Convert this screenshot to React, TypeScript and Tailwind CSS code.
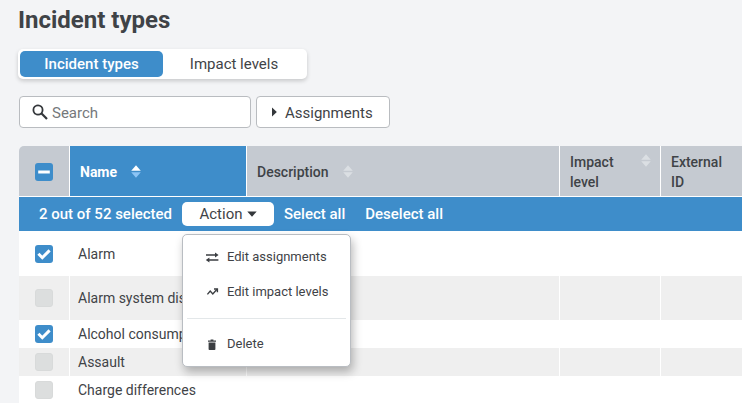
import { useState } from 'react';
import { clsx } from 'clsx';

type Incident = {
  name: string;
  checked: boolean;
  height: string;
};

const incidents: Incident[] = [
  { name: 'Alarm', checked: true, height: 'h-[45px]' },
  { name: 'Alarm system disarmed', checked: false, height: 'h-11' },
  { name: 'Alcohol consumption', checked: true, height: 'h-7' },
  { name: 'Assault', checked: false, height: 'h-7' },
  { name: 'Charge differences', checked: false, height: 'h-7' },
];

const tabs = ['Incident types', 'Impact levels'];

const SearchIcon = () => (
  <svg viewBox="0 0 16 16" className="h-4 w-4 shrink-0" fill="none" stroke="#34373b" strokeWidth="1.8">
    <circle cx="6" cy="6" r="4.6" />
    <path d="M9.3 9.3 15 15" strokeWidth="2.2" />
  </svg>
);

const SortIcon = ({ active = false }: { active?: boolean }) => (
  <svg viewBox="0 0 10 14" className="h-3.5 w-2.5 shrink-0">
    <path d="M5 .3 9.8 5.8H.2z" fill={active ? '#fff' : '#dbdfe3'} />
    <path d="M5 12.7.2 7.2h9.6z" fill={active ? '#8cc4f5' : '#dbdfe3'} />
  </svg>
);

const SwapIcon = () => (
  <svg viewBox="0 0 14 12" className="h-3 w-3.5" fill="#3b3e42">
    <path d="M1 2.2h9V.4l3.6 2.6L10 5.6V3.8H1z" />
    <path d="M13.4 7.2H4.4V5.4L.8 8l3.6 2.6V8.8h9z" />
  </svg>
);

const TrendIcon = () => (
  <svg viewBox="0 0 14 12" className="h-3 w-3.5" fill="none" stroke="#3b3e42" strokeWidth="1.4">
    <path d="M2.4 7.4 5.2 4l2.6 3L12 2.2" />
    <path d="M9 2h3.4v3.2" />
  </svg>
);

const TrashIcon = () => (
  <svg viewBox="0 0 14 12" className="h-3 w-3.5" fill="#3b3e42">
    <path d="M5.6.6h2.8v.8H11v1.4H3V1.4h2.6zM3.6 3.6h6.8v6.6q0 .8-.9.8h-5q-.9 0-.9-.8z" />
  </svg>
);

type CheckboxProps = {
  label: string;
  checked?: boolean;
  mixed?: boolean;
  onChange?: () => void;
};

const Checkbox = ({ label, checked = false, mixed = false, onChange }: CheckboxProps) => (
  <label className="ml-4 grid h-[18px] w-[18px] place-items-center">
    <input
      type="checkbox"
      aria-label={label}
      checked={checked}
      onChange={onChange}
      className={clsx(
        'col-start-1 row-start-1 h-[18px] w-[18px] appearance-none rounded-[3px]',
        checked || mixed ? 'bg-[#3e8dca]' : 'border border-[#d8dada] bg-[#dcdede]',
      )}
    />
    {(checked || mixed) && (
      <svg
        viewBox="0 0 18 18"
        className="pointer-events-none col-start-1 row-start-1 h-[18px] w-[18px]"
        fill="none"
        stroke="#fff"
        strokeWidth="3"
      >
        <path d={mixed ? 'M3.2 9h11.6' : 'M3.4 8.8 7.3 12.7l7.3-7.3'} />
      </svg>
    )}
  </label>
);

const ActionMenu = () => {
  const [open, setOpen] = useState(true);

  return (
    <div className="relative">
      <button
        onClick={() => setOpen(!open)}
        className="flex h-6 w-[92px] items-center justify-center gap-1 rounded-[5px] bg-white pt-0.5 text-[15px] font-normal text-[#3f4347]"
      >
        Action
        <svg viewBox="0 0 10 6" className="mb-0.5 h-1.5 w-2.5" fill="#34373b">
          <path d="M.3.4h9.4L5 5.7z" />
        </svg>
      </button>
      {open && (
        <div className="absolute top-8 left-0 z-10 w-[169px] rounded-[5px] border border-[#b9bdc2] bg-white px-1 pt-[5px] pb-1 text-[13px] font-normal text-[#3f4347] shadow-[2px_5px_10px_rgba(0,0,0,0.28)]">
          <button className="flex h-[35px] w-full items-center gap-2 pl-[18px]">
            <SwapIcon />
            Edit assignments
          </button>
          <button className="flex h-[35px] w-full items-center gap-2 pl-[18px]">
            <TrendIcon />
            Edit impact levels
          </button>
          <hr className="my-2 border-[#e3e7e9]" />
          <button className="flex h-[35px] w-full items-center gap-2 pl-[18px]">
            <TrashIcon />
            Delete
          </button>
        </div>
      )}
    </div>
  );
};

const App = () => {
  const [rows, setRows] = useState(incidents);
  const [tab, setTab] = useState(tabs[0]);

  const toggle = (name: string) => {
    setRows(rows.map((row) => (row.name === name ? { ...row, checked: !row.checked } : row)));
  };

  return (
    <main className="h-screen overflow-hidden bg-[#f3f4f6] pt-1 pl-[18px] font-[Roboto,sans-serif] text-[#3f4347]">
      <h1 className="text-2xl font-bold">Incident types</h1>

      <div className="mt-[13px] flex w-fit rounded-[5px] bg-white p-0.5 text-[15px] shadow-[0_2px_4px_rgba(0,0,0,0.18)]">
        {tabs.map((item) => (
          <button
            key={item}
            onClick={() => setTab(item)}
            className={clsx(
              'h-[26px] rounded-[5px]',
              item === tab ? 'w-[143px] bg-[#3e8dca] font-medium text-white' : 'w-[142px]',
            )}
          >
            {item}
          </button>
        ))}
      </div>

      <div className="mt-[17px] ml-px flex gap-[5px]">
        <label className="flex h-8 w-[232px] items-center gap-1 rounded-[4px] border border-[#b9bcc0] bg-white pl-3">
          <SearchIcon />
          <input
            type="text"
            aria-label="Search"
            placeholder="Search"
            className="w-full min-w-0 bg-transparent pt-0.5 text-[15px] outline-none placeholder:text-[#75787b]"
          />
        </label>
        <button className="flex h-8 w-[134px] items-center gap-2 rounded-[4px] border border-[#b9bcc0] bg-white pl-[15px] text-[15px]">
          <svg viewBox="0 0 5 10" className="h-2.5 w-[5px]" fill="#34373b">
            <path d="M0 .5 4.8 5 0 9.5z" />
          </svg>
          <span className="pt-0.5">Assignments</span>
        </button>
      </div>

      <table className="mt-[18px] ml-px w-[calc(100%-1px)] table-fixed border-collapse text-left text-sm">
        <colgroup>
          <col className="w-[51px]" />
          <col className="w-[177px]" />
          <col />
          <col className="w-[101px]" />
          <col className="w-[81px]" />
        </colgroup>
        <thead>
          <tr className="h-[51px]">
            <th className="rounded-tl-[5px] bg-[#c5cad1] p-0 shadow-[inset_-1px_-1px_#fff]">
              <Checkbox label="Select all rows" mixed />
            </th>
            <th className="bg-[#3e8dca] px-2.5 py-0 font-bold text-white shadow-[inset_-1px_-1px_#fff]">
              <span className="flex items-center gap-3.5">
                Name
                <SortIcon active />
              </span>
            </th>
            <th className="bg-[#c5cad1] px-2.5 py-0 font-medium shadow-[inset_-1px_-1px_#fff]">
              <span className="flex items-center gap-3.5">
                Description
                <SortIcon />
              </span>
            </th>
            <th className="bg-[#c5cad1] px-2.5 py-0 font-medium shadow-[inset_-1px_-1px_#fff]">
              <span className="flex items-start justify-between">
                <span className="w-14">Impact level</span>
                <span className="pt-0.5">
                  <SortIcon />
                </span>
              </span>
            </th>
            <th className="bg-[#c5cad1] px-2.5 py-0 font-medium shadow-[inset_0_-1px_#fff]">
              <span className="block w-14">External ID</span>
            </th>
          </tr>
        </thead>
        <tbody>
          <tr>
            <td colSpan={5} className="bg-[#3e8dca] p-0">
              <div className="flex h-[34px] items-center pl-5 text-[15px] font-medium text-white">
                <span className="w-[143px] pt-0.5">2 out of 52 selected</span>
                <ActionMenu />
                <button className="ml-2.5 pt-0.5">Select all</button>
                <button className="ml-5 pt-0.5">Deselect all</button>
              </div>
            </td>
          </tr>
          {rows.map((row, index) => (
            <tr key={row.name} className={clsx(row.height, index % 2 ? 'bg-[#efefef]' : 'bg-white')}>
              <td className="p-0 shadow-[inset_-1px_0_#fff]">
                <Checkbox label={row.name} checked={row.checked} onChange={() => toggle(row.name)} />
              </td>
              <td className="truncate px-2 py-0 shadow-[inset_-1px_0_#fff]">{row.name}</td>
              <td className="p-0 shadow-[inset_-1px_0_#fff]" />
              <td className="p-0 shadow-[inset_-1px_0_#fff]" />
              <td className="p-0" />
            </tr>
          ))}
        </tbody>
      </table>
    </main>
  );
};

export default App;
